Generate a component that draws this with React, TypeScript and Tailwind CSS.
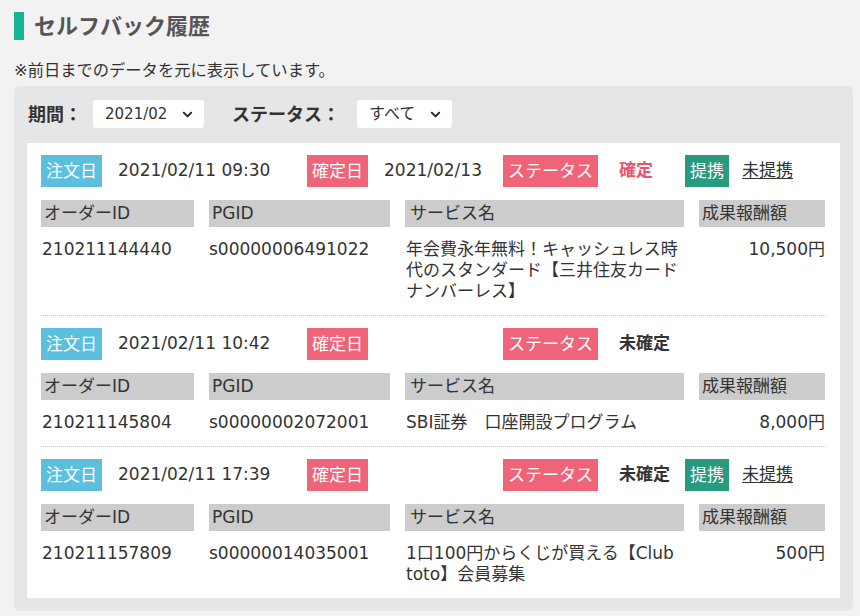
import { ChevronDown } from 'lucide-react';

type Order = {
  orderedAt: string;
  fixedAt: string;
  status: string;
  confirmed: boolean;
  affiliate: boolean;
  orderId: string;
  pgid: string;
  service: string;
  reward: string;
};

const orders: Order[] = [
  {
    orderedAt: '2021/02/11 09:30',
    fixedAt: '2021/02/13',
    status: '確定',
    confirmed: true,
    affiliate: true,
    orderId: '210211144440',
    pgid: 's00000006491022',
    service: '年会費永年無料！キャッシュレス時代のスタンダード【三井住友カードナンバーレス】',
    reward: '10,500円',
  },
  {
    orderedAt: '2021/02/11 10:42',
    fixedAt: '',
    status: '未確定',
    confirmed: false,
    affiliate: false,
    orderId: '210211145804',
    pgid: 's00000002072001',
    service: 'SBI証券　口座開設プログラム',
    reward: '8,000円',
  },
  {
    orderedAt: '2021/02/11 17:39',
    fixedAt: '',
    status: '未確定',
    confirmed: false,
    affiliate: true,
    orderId: '210211157809',
    pgid: 's00000014035001',
    service: '1口100円からくじが買える【Club toto】会員募集',
    reward: '500円',
  },
];

function Badge({ color, children }: { color: string; children: React.ReactNode }) {
  return <span className={`inline-block h-[32px] px-[5px] leading-[32px] text-white ${color}`}>{children}</span>;
}

function FakeSelect({ value, className }: { value: string; className: string }) {
  return (
    <div className={`flex h-[28px] items-center justify-between rounded-[3px] bg-white pl-[12px] pr-[9px] text-[#333] ${className}`}>
      <span>{value}</span>
      <ChevronDown size={15} strokeWidth={3} className="text-[#222]" />
    </div>
  );
}

function OrderRow({ order }: { order: Order }) {
  return (
    <div className="border-b border-dotted border-[#c4c4c4] pt-[12px] pb-[13px] last:border-b-0">
      {/* badges */}
      <div className="flex h-[32px] items-center">
        <div className="flex w-[266px] items-center">
          <Badge color="bg-[#5bbfdd]">注文日</Badge>
          <span className="ml-[16px]">{order.orderedAt}</span>
        </div>
        <div className="flex w-[196px] items-center">
          <Badge color="bg-[#ef6479]">確定日</Badge>
          <span className="ml-[16px]">{order.fixedAt}</span>
        </div>
        <div className="flex w-[182px] items-center">
          <Badge color="bg-[#ef6479]">ステータス</Badge>
          <span className={`ml-[21px] font-bold ${order.confirmed ? 'text-[#e8546d]' : 'text-[#333]'}`}>{order.status}</span>
        </div>
        {order.affiliate && (
          <div className="flex items-center">
            <Badge color="bg-[#2a9a7e]">提携</Badge>
            <span className="ml-[13px] underline underline-offset-2">未提携</span>
          </div>
        )}
      </div>

      {/* table */}
      <div className="mt-[13px] grid grid-cols-[153px_181px_279px_126px] gap-x-[15px]">
        <div className="h-[27px] bg-[#cccccc] pl-[3px] leading-[27px]">オーダーID</div>
        <div className="h-[27px] bg-[#cccccc] pl-[3px] leading-[27px]">PGID</div>
        <div className="h-[27px] bg-[#cccccc] pl-[5px] leading-[27px]">サービス名</div>
        <div className="h-[27px] bg-[#cccccc] pl-[3px] leading-[27px]">成果報酬額</div>

        <div className="mt-[12px] pl-[1px] leading-[21px]">{order.orderId}</div>
        <div className="mt-[12px] leading-[21px]">{order.pgid}</div>
        <div className="mt-[12px] pl-[1px] leading-[21px]">{order.service}</div>
        <div className="mt-[12px] text-right leading-[21px]">{order.reward}</div>
      </div>
    </div>
  );
}

export default function App() {
  return (
    <div className="min-h-screen bg-[#f2f2f2] pt-[12px] pr-[7px] pb-[4px] pl-[14px] font-['DejaVu_Sans','Noto_Sans_CJK_JP',sans-serif] text-[#333]">
      <div className="flex h-[28px] items-center">
        <div className="h-[28px] w-[10px] bg-[#17b495]" />
        <h1 className="ml-[10px] text-[22px] font-bold text-[#555]">セルフバック履歴</h1>
      </div>

      <p className="mt-[19px] text-[16.3px] leading-[24px]">※前日までのデータを元に表示しています。</p>

      <div className="mt-[3px] rounded-[6px] bg-[#e6e6e6] pt-[14px] pr-[13px] pb-[13px] pl-[13px]">
        <div className="flex h-[28px] items-center pl-[1px]">
          <span className="text-[18px] font-bold">期間：</span>
          <div className="ml-[11px]">
            <FakeSelect value="2021/02" className="w-[111px] text-[15px]" />
          </div>
          <span className="ml-[28px] text-[18px] font-bold">ステータス：</span>
          <div className="ml-[17px]">
            <FakeSelect value="すべて" className="w-[95px] text-[16px]" />
          </div>
        </div>

        <div className="mt-[15px] bg-white px-[14px] text-[17px]">
          {orders.map((o) => (
            <OrderRow key={o.orderId} order={o} />
          ))}
        </div>
      </div>
    </div>
  );
}
